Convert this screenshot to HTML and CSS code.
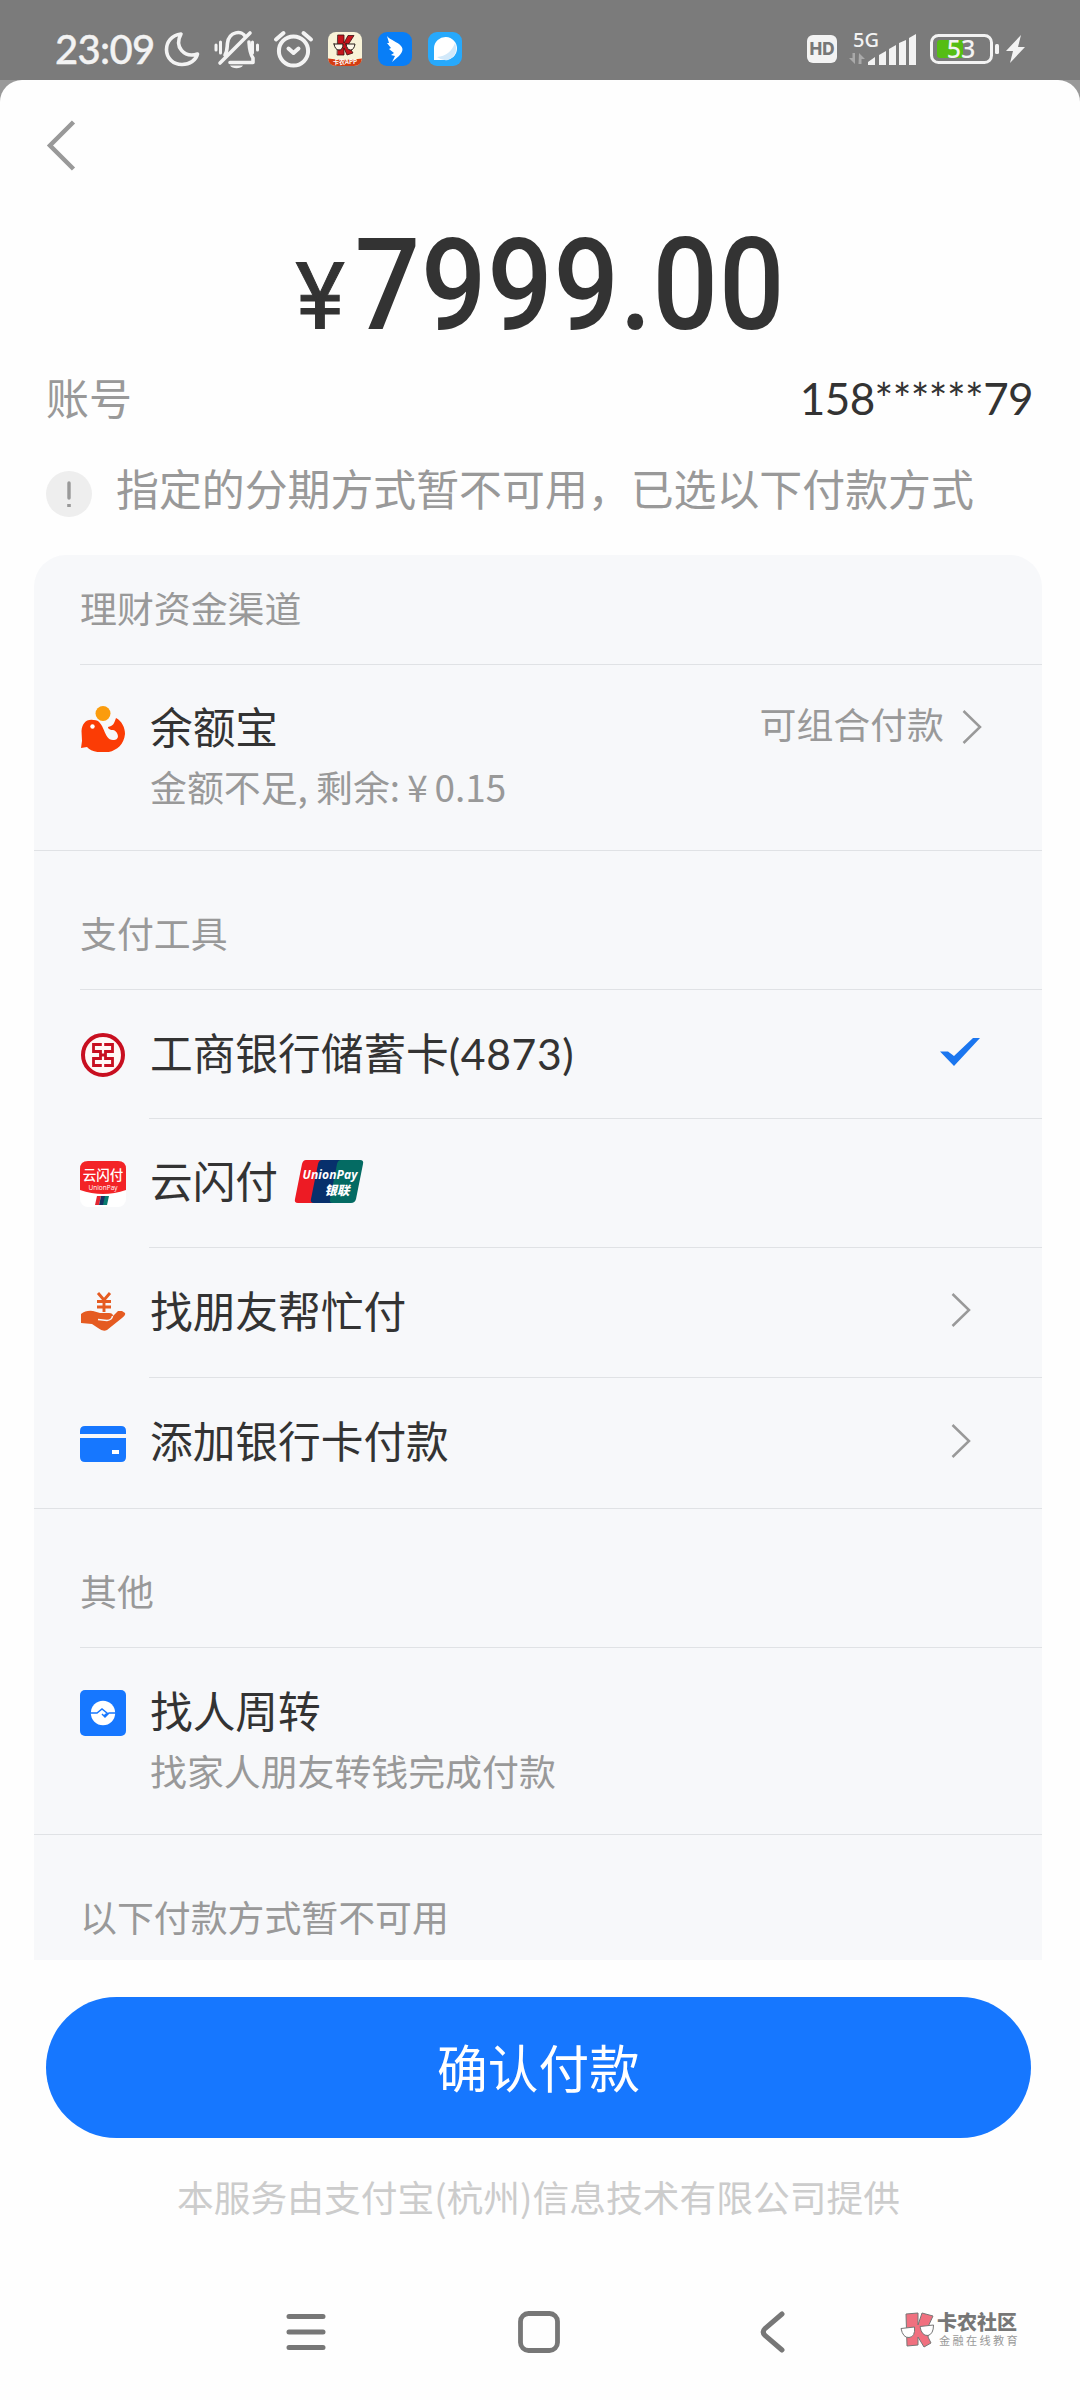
FILE: index.html
```html
<!DOCTYPE html>
<html lang="zh-CN">
<head>
<meta charset="utf-8">
<title>确认付款</title>
<link rel="stylesheet" href="styles.css">
</head>
<body>
<div class="screen">
  <header class="status">
    <span class="time">23:09</span>
    <svg class="status-left" width="300" height="44" viewBox="164 28 300 44" fill="none" stroke="#f3f3f3" stroke-width="3.6" stroke-linecap="round" stroke-linejoin="round">
      <path d="M181 34C171.500 35 166.500 42 166.500 49.500C166.500 58 173 64.500 182 64.500C190 64.500 196 60 197.500 54C184 58 174 47 181 34Z"/>
      <path d="M225 55C227.500 51 227 47 227.500 43C229 31.500 242 29.500 245.500 37M249 42C249.500 50 250 54 253 58V62.500H230M220 63L250 33"/>
      <path d="M230 65.500H243C241 69 232 69 230 65.500Z" fill="#f3f3f3" stroke="none"/>
      <path d="M216 45V50M220.500 42V53M252.500 42V53M257.500 45V50" stroke-width="3"/>
      <circle cx="293.500" cy="51" r="14.600" stroke-width="4"/><path d="M288.500 48.500L293.500 53L298.500 48.500M276 39.500L283.500 33M303.500 33L311 39.500" stroke-width="4"/>
      <g stroke="none">
        <rect x="328" y="32" width="34" height="34" rx="8" fill="#f8f3d8"/>
        <path d="M328 58.500Q345 61 362 58.500Q361 66 354 66H336Q329 66 328 58.500Z" fill="#d43d12"/>
        <path d="M338 35H344V43L348 35.500H354L348 45L353 53L347 55L344 48V55H337.500Z" fill="#c4141b" stroke="#391010" stroke-width=".8"/>
        <path d="M334 44H343Q343 50 339 50Q335 50 334 44ZM346 44H355Q354 50 350.500 50Q347 50 346 44Z" fill="#fff9ea" stroke="#241b17" stroke-width="1"/>
        <text class="mini-app" x="345" y="64" text-anchor="middle">卡农APP</text>
        <rect x="378" y="32" width="34" height="34" rx="9" fill="#087ef7"/>
        <path d="M387 36C390 40 398 42 401 46C404 49 402 53 399 56L392 62L395 56L391 55L394 53L389 49L391 48L387 43L389 43Z" fill="#fff"/>
        <rect x="428" y="32" width="34" height="34" rx="9" fill="#27a9fc"/>
        <path d="M434 60V48A11.500 11.500 0 1 1 445 60Z" fill="#fff"/><path d="M437 57Q450 56 455 43Q459 55 448 60Q442 61 437 57Z" fill="#d2e9fa"/>
      </g>
    </svg>
    <svg class="status-right" width="222" height="52" viewBox="805 20 222 52" fill="#f3f3f3">
      <rect x="807" y="35" width="30" height="28" rx="6"/><text class="hd" x="822" y="55" text-anchor="middle">HD</text>
      <text class="net" x="853" y="47" textLength="26">5G</text>
      <path d="M855 53V64L849 58H852.500V53ZM859 53L865 59H861.500V64H858.500Z" fill="#a9a9a9"/>
      <path d="M868 62L875 57V65H868ZM879 55L886 51V65H879ZM889 49L896 45V65H889ZM899 43L906 40V65H899ZM909 38L916 34V65H909Z"/>
      <rect x="931.500" y="35.500" width="60" height="27" rx="7" fill="none" stroke="#f3f3f3" stroke-width="3"/>
      <path d="M937 43Q937 40 940 40H963V58H940Q937 58 937 55Z" fill="#55bd13"/><rect x="995" y="44" width="4" height="10" rx="1.500"/>
      <text class="battery" x="961" y="58" text-anchor="middle">53</text>
      <path d="M1021 35L1006 51H1013L1010 63L1025 47H1018Z"/>
    </svg>
  </header>

  <main class="sheet">
    <div class="topbar"><svg width="30" height="54" viewBox="0 0 30 54"><path d="M27.500 4L4 27.500L27.500 51" fill="none" stroke="#999" stroke-width="4.500"/></svg></div>
    <div class="amount"><div class="amount-in"><span class="yen">¥</span><span class="num">7999.00</span></div></div>
    <div class="account"><span class="label">账号</span><span class="phone">158******79</span></div>
    <div class="notice">
      <svg width="46" height="46" viewBox="0 0 46 46"><circle cx="23" cy="23" r="23" fill="#eee"/><path d="M23 12V27" stroke="#999" stroke-width="3.400" stroke-linecap="round"/><path d="M23 33V36" stroke="#999" stroke-width="3.600"/></svg>
      <span class="notice-text">指定的分期方式暂不可用，已选以下付款方式</span>
    </div>

    <section class="card">
      <h2 class="group first">理财资金渠道</h2>
      <div class="row tall">
        <svg class="icon" viewBox="0 0 46 46"><circle cx="23" cy="7.500" r="7.500" fill="#fb9c0d"/><path d="M1.500 25C2 18 6 13 13 14C25 13 23 34 33 34C41 34 38 25 33 24C29 24 28 22 28 21C33 20 34 18 36 12C42 15 45 22 45 28C44 40 34 46.500 24 46.500C17 46.500 10 45 7 41L1 42L2 35Z" fill="#fb3c05"/><circle cx="12.500" cy="20.500" r="2.200" fill="#fff"/></svg>
        <div class="names"><span class="name">余额宝</span><span class="sub">金额不足, 剩余:<span class="cny">¥</span>0.15</span></div>
        <span class="extra">可组合付款</span>
        <svg class="arrow far" width="20" height="34" viewBox="0 0 20 34"><path d="M1.500 1L18 17L1.500 33"/></svg>
      </div>

      <h2 class="group">支付工具</h2>
      <div class="row r1">
        <svg class="icon" viewBox="0 0 46 46"><circle cx="23" cy="23" r="20" fill="#fff8f6" stroke="#c80f20" stroke-width="4"/><path d="M21.800 12.500H13.500V19.500H20.500V26.500H13.500V33.500H21.800M24.200 12.500H32.500V19.500H25.500V26.500H32.500V33.500H24.200M20.500 23H25.500" fill="none" stroke="#c80f20" stroke-width="2.800"/></svg>
        <span class="name">工商银行储蓄卡<span class="digits">(4873)</span></span>
        <svg class="check" width="42" height="32" viewBox="0 0 42 32"><path d="M1 15.500H9L15 20L34 2H41L15 30Z" fill="#1b76ef"/></svg>
      </div>
      <div class="row r2 line">
        <svg class="icon" viewBox="0 0 46 46"><rect width="46" height="46" rx="8" fill="#fff"/><path d="M0 8Q0 0 8 0H38Q46 0 46 8V29Q23 37 0 29Z" fill="#f32326"/><text class="quick" x="23" y="19" text-anchor="middle">云闪付</text><text class="quick-en" x="23" y="28.500" text-anchor="middle">UnionPay</text><path d="M17 35H21L19 44H15Z" fill="#e32531"/><path d="M21 35H26L24 44H19Z" fill="#163263"/><path d="M25 35H29L27 44H23Z" fill="#087b70"/></svg>
        <span class="name">云闪付</span>
        <svg class="union" width="70" height="44" viewBox="0 0 70 44"><path d="M12 0H31L23 43H4Q0 43 1 39L8 4Q9 0 12 0Z" fill="#ed1b24"/><path d="M28 0H51L42 43H20Q16 43 17 39L24 4Q25 0 28 0Z" fill="#07306c"/><path d="M47 0H66Q70 0 69 4L62 39Q61 43 57 43H39Q35 43 36 39L43 4Q44 0 47 0Z" fill="#046b63"/><text class="union-en" x="36" y="19" text-anchor="middle" textLength="55">UnionPay</text><text class="union-cn" x="43" y="34.500" text-anchor="middle">银联</text></svg>
      </div>
      <div class="row r3 line">
        <svg class="icon" viewBox="0 0 46 46"><path d="M1 25Q6 21 13 22L20 24H29Q33 24 33 27L38 22L42 22L45 24Q46 26 42 29L27 41Q23 43 18 39L12 35L1 34Z" fill="#e55b21"/><path d="M18 30.500L27 31.500Q32 31 32.500 27" fill="none" stroke="#f7f8fa" stroke-width="1.500"/><path d="M18 4L24 11L30 4M24 11V23M17 12.500H31M17 18H31" stroke="#e55b21" stroke-width="2.900" fill="none"/></svg>
        <span class="name">找朋友帮忙付</span>
        <svg class="arrow" width="20" height="34" viewBox="0 0 20 34"><path d="M1.500 1L18 17L1.500 33"/></svg>
      </div>
      <div class="row r4 line">
        <svg class="icon" viewBox="0 0 46 46"><path d="M0 14V11Q0 6 5 6H41Q46 6 46 11V14ZM0 18H46V37Q46 42 41 42H5Q0 42 0 37Z" fill="#1677ff"/><path d="M32 30H39V34H32Z" fill="#fff"/></svg>
        <span class="name">添加银行卡付款</span>
        <svg class="arrow" width="20" height="34" viewBox="0 0 20 34"><path d="M1.500 1L18 17L1.500 33"/></svg>
      </div>

      <h2 class="group">其他</h2>
      <div class="row tall second">
        <svg class="icon" viewBox="0 0 46 46"><rect width="46" height="46" rx="5" fill="#1677ff"/><circle cx="23" cy="23" r="12.200" fill="#fff"/><path d="M10 23H17L22 19L27 23L24 26L22 24M22 24L25 27L29 23H36" fill="none" stroke="#1677ff" stroke-width="1.500"/></svg>
        <div class="names"><span class="name">找人周转</span><span class="sub">找家人朋友转钱完成付款</span></div>
      </div>
      <h2 class="group last">以下付款方式暂不可用</h2>
    </section>

    <button class="pay">确认付款</button>
    <p class="provider">本服务由支付宝(杭州)信息技术有限公司提供</p>
  </main>

  <nav class="nav">
    <svg width="40" height="44" viewBox="0 0 40 44"><path d="M3 6.500H37M3 22H37M3 37.500H37" stroke="#777" stroke-width="5" stroke-linecap="round"/></svg>
    <svg width="42" height="44" viewBox="0 0 42 44"><rect x="2.500" y="3.500" width="37" height="37" rx="8" fill="none" stroke="#777" stroke-width="4.800"/></svg>
    <svg width="26" height="44" viewBox="0 0 26 44"><path d="M22 4L5 18.500Q1.500 22 5 25.500L22 40" fill="none" stroke="#777" stroke-width="5" stroke-linecap="round"/></svg>
    <div class="brand">
      <svg width="36" height="38" viewBox="0 0 36 38"><path d="M6 2L18 1V13L22 1L33 4L27 17L29 20L28 25L31 31L24 35L18 25V33L7 34Z" fill="#f0707f" stroke="#777" stroke-width="1"/><path d="M1 16.500L14.500 15Q15.500 25 9 25.500Q3 26 1 16.500ZM20 14.500L33.500 13Q33.500 22 28 23.500Q21.500 24 20 14.500Z" fill="#fff" stroke="#777" stroke-width="1"/></svg>
      <div class="brand-text"><b>卡农社区</b><small>金融在线教育</small></div>
    </div>
  </nav>
</div>
</body>
</html>
```
FILE: styles.css
```css
* { box-sizing: border-box; }
body { margin: 0; background: #7b7b7b; font-family: "Noto Sans CJK SC", sans-serif; color: #333; }
svg { display: block; flex: none; }
.screen { width: 1080px; height: 2400px; display: flex; flex-direction: column; background: #999; }
.status { height: 80px; flex: none; display: flex; align-items: flex-start; padding: 28px 53px 0 55px; background: #7b7b7b; }
.time { width: 109px; font: 500 40px/43px Lato, sans-serif; color: #f3f3f3; letter-spacing: -.7px; -webkit-text-stroke: .4px #f3f3f3; }
.status-right { margin: -8px 0 0 auto; }
.mini-app { font: 700 6px "Noto Sans CJK SC", sans-serif; fill: #fff; }
.hd { font: 800 17px Inter, sans-serif; fill: #777; }
.net { font: 500 20px "Noto Sans", sans-serif; }
.battery { font: 500 25px "Noto Sans", sans-serif; }

.sheet { flex: 1; display: flex; flex-direction: column; align-items: stretch; background: #fefefe; border-radius: 22px 22px 0 0; }
.topbar { height: 130px; padding: 38px 0 0 46px; flex: none; }
.amount { height: 145px; display: flex; justify-content: center; align-items: center; flex: none; padding: 17px 0 0 4px; }
.amount-in { display: flex; align-items: baseline; font: 500 128px/145px Roboto, sans-serif; transform: scaleX(.9); }
.yen { display: inline-block; font-size: 93px; font-weight: 400; -webkit-text-stroke: 1px #333; margin-right: 14px; transform: scaleX(1.12); }
.num { letter-spacing: .9px; }
.account { height: 90px; flex: none; display: flex; justify-content: space-between; align-items: center; padding: 0 47px 0 46px; font-size: 43px; line-height: 60px; }
.label { color: #999; margin-top: -9px; }
.phone { font-family: Lato, sans-serif; font-size: 44px; letter-spacing: -.6px; margin-top: -4px; }
.notice { height: 110px; flex: none; display: flex; align-items: flex-start; gap: 24px; padding: 26px 46px 0; font-size: 42.900px; line-height: 60px; color: #999; white-space: nowrap; }
.notice-text { margin-top: -14px; }
.card { margin: 0 38px 0 34px; height: 1405px; flex: none; background: #f7f8fa; border-radius: 32px 32px 0 0; overflow: hidden; }
.group { height: 139px; margin: 0; padding: 29px 0 0 46px; font-weight: 400; font-size: 36.900px; line-height: 105px; color: #999; background: linear-gradient(#e0e2e5, #e0e2e5) 46px 100% / 100% 1px no-repeat; }
.group.first { height: 110px; padding-top: 0; }
.group.last { height: 125px; background: none; }
.row { display: flex; align-items: center; padding: 0 61px 0 46px; }
.r1 { height: 128px; }
.r2 { height: 129px; }
.r3 { height: 130px; }
.r4 { height: 132px; border-bottom: 1px solid #e0e2e5; }
.line { background: linear-gradient(#e0e2e5, #e0e2e5) 115px 0 / 100% 1px no-repeat; }
.icon { width: 46px; height: 46px; margin-right: 24px; }
.r1 .icon, .r2 .icon { margin-top: 2px; }
.name { font-size: 42.700px; line-height: 58px; white-space: nowrap; margin-top: -4px; }
.r2 .name, .r3 .name, .r4 .name { margin-top: -7px; }
.digits { font-family: Lato, sans-serif; letter-spacing: .6px; }
.tall { height: 186px; align-items: flex-start; padding-top: 41px; border-bottom: 1px solid #e0e2e5; }
.tall.second { height: 187px; padding-top: 42px; }
.names { display: flex; flex-direction: column; margin-top: -6px; }
.sub { font-size: 36.900px; line-height: 60px; color: #999; white-space: nowrap; margin-top: 2px; }
.cny { margin: 0 7px; }
.extra { margin-left: auto; margin-right: 18px; font-size: 36.900px; line-height: 50px; color: #999; margin-top: -8px; }
.arrow { margin: -4px 10px 0 auto; }
.arrow path { fill: none; stroke: #999; stroke-width: 2.500px; }
.arrow.far { margin: 4px -1px 0 0; }
.check { margin-left: auto; margin-top: -4px; }
.union { margin-left: 16px; margin-top: -1px; }
.quick { font: 500 13.500px "Noto Sans CJK SC", sans-serif; fill: #fff; }
.quick-en { font: 6.500px "Open Sans", sans-serif; fill: #fff; }
.union-en { font: italic 700 12px "Open Sans", sans-serif; fill: #fff; }
.union-cn { font: italic 900 12.500px "Noto Sans CJK SC", sans-serif; fill: #fff; }
.pay { margin: 37px 49px 0 46px; height: 141px; flex: none; border: 0; border-radius: 71px; background: #1677ff; color: #fff; font: 400 50.700px/138px "Noto Sans CJK SC", sans-serif; padding: 0 0 3px; }
.provider { margin: 31px 0 0; padding-right: 3px; text-align: center; color: #ccc; font-size: 36.750px; line-height: 54px; }
.nav { height: 135px; flex: none; background: #fefefe; display: flex; padding: 45px 0 0 286px; align-items: flex-start; }
.nav > svg:nth-child(2) { margin-left: 192px; }
.nav > svg:nth-child(3) { margin-left: 200px; }
.brand { display: flex; margin-left: 114px; padding-top: 2px; gap: 1px; }
.brand-text { display: flex; flex-direction: column; white-space: nowrap; }
.brand b { color: #777; font-weight: 900; font-size: 20px; line-height: 20px; }
.brand small { color: #999; font-size: 11.200px; line-height: 15px; margin-top: 1px; letter-spacing: 2.300px; padding-left: 2px; }
```
